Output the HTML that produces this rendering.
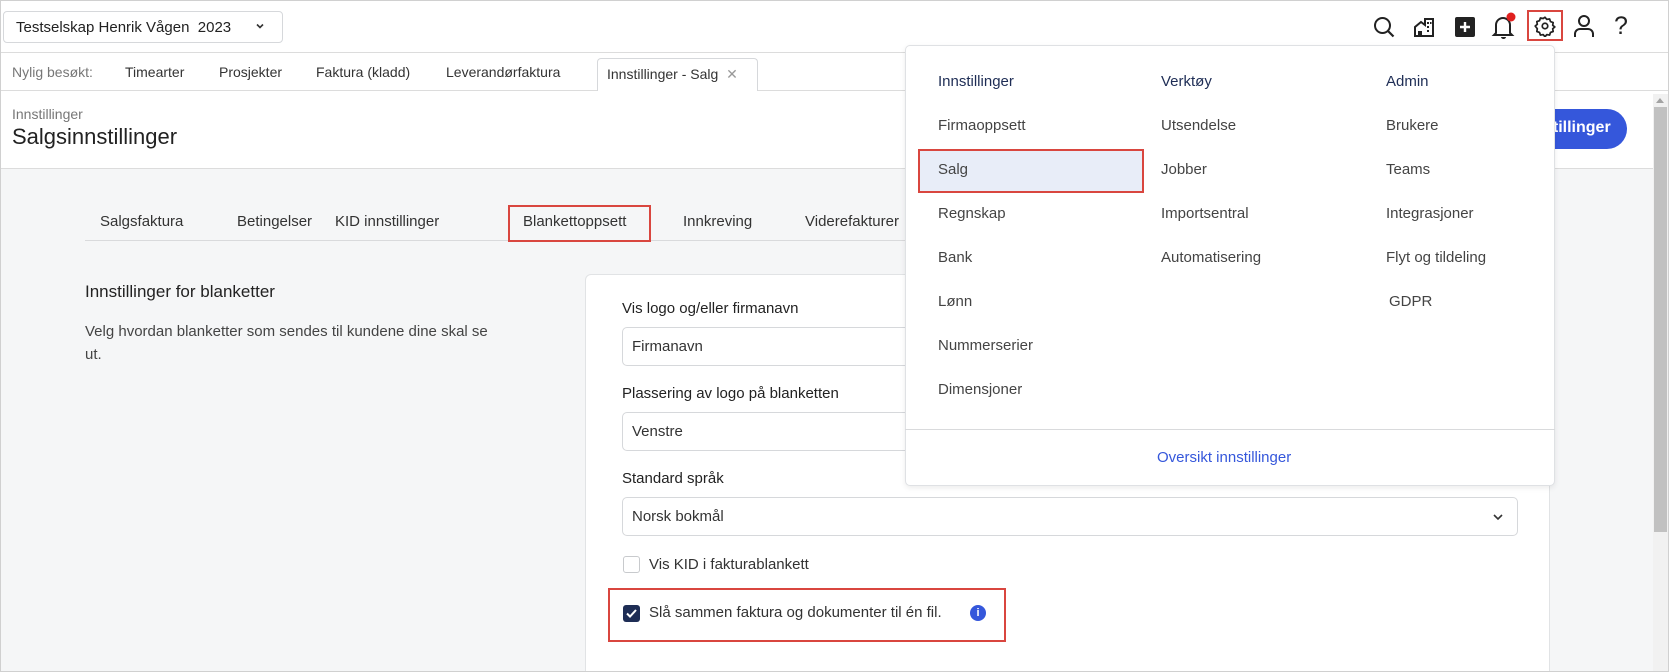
<!DOCTYPE html>
<html style="overflow:hidden;width:1669px;height:672px"><head><meta charset="utf-8"><style>
*{box-sizing:border-box;margin:0;padding:0}
body{width:1669px;height:672px;overflow:hidden;font-family:"Liberation Sans",sans-serif;color:#222;background:#fff;position:relative}
.a{position:absolute;white-space:nowrap}
.bd{border:1px solid #d6d8db}
</style></head><body>
<div class="a" style="left:0;top:0;width:1669px;height:672px;border:1px solid #d0d0d0;z-index:50;pointer-events:none"></div>
<!-- top bar -->
<div class="a" style="left:0;top:52px;width:1669px;height:1px;background:#dcdcdc"></div>
<div class="a bd" style="left:3px;top:11px;width:280px;height:32px;border-radius:4px"></div>
<div class="a" style="left:16px;top:19px;font-size:15px;color:#222">Testselskap Henrik Vågen&nbsp;&nbsp;2023</div>
<svg class="a" style="left:254px;top:20px" width="12" height="12" viewBox="0 0 12 12"><path d="M3 4.5l3 3 3-3" fill="none" stroke="#333" stroke-width="1.6"/></svg>
<!-- icons -->
<svg class="a" style="left:1372px;top:15px" width="24" height="24" viewBox="0 0 24 24"><circle cx="10.5" cy="10.5" r="7.5" fill="none" stroke="#222" stroke-width="2"/><path d="M16 16l5.5 5.5" stroke="#222" stroke-width="2.2"/></svg>
<svg class="a" style="left:1412px;top:15px" width="24" height="24" viewBox="0 0 24 24"><path d="M3 21V12l6-5 4 3V4h8v17z" fill="none" stroke="#222" stroke-width="2"/><path d="M6 21v-5h4v5" fill="#222"/><rect x="15" y="7" width="2" height="2" fill="#222"/><rect x="18" y="7" width="1.5" height="2" fill="#222"/><rect x="15" y="11" width="2" height="2" fill="#222"/><rect x="15" y="15" width="2" height="2" fill="#222"/></svg>
<svg class="a" style="left:1455px;top:17px" width="20" height="20" viewBox="0 0 20 20"><rect width="20" height="20" rx="2" fill="#222"/><path d="M10 5v10M5 10h10" stroke="#fff" stroke-width="2.4"/></svg>
<svg class="a" style="left:1491px;top:12px" width="26" height="28" viewBox="0 0 26 28"><path d="M5 21V13a7 7 0 0 1 14 0v8l2 2H3z" fill="none" stroke="#222" stroke-width="2"/><path d="M10 25a2.5 2 0 0 0 5 0" fill="#222"/><circle cx="20" cy="5" r="4.5" fill="#e0201e"/></svg>
<div class="a" style="left:1527px;top:10px;width:36px;height:31px;border:2px solid #d9463f"></div>
<svg class="a" style="left:1534px;top:15px" width="22" height="22" viewBox="0 0 24 24"><path d="M12 2.5l2 2.3 3-.5 1 2.9 2.9 1-.5 3 2.3 1.8-2.3 2 .5 3-2.9 1-1 2.9-3-.5-2 2.3-2-2.3-3 .5-1-2.9-2.9-1 .5-3L1.3 12l2.3-1.8-.5-3 2.9-1 1-2.9 3 .5z" fill="none" stroke="#222" stroke-width="1.9" stroke-linejoin="round"/><circle cx="12" cy="12" r="3" fill="none" stroke="#222" stroke-width="1.9"/></svg>
<svg class="a" style="left:1573px;top:14px" width="22" height="24" viewBox="0 0 22 24"><circle cx="11" cy="7" r="5" fill="none" stroke="#222" stroke-width="2"/><path d="M2 23v-3a5 5 0 0 1 5-5h8a5 5 0 0 1 5 5v3" fill="none" stroke="#222" stroke-width="2"/></svg>
<div class="a" style="left:1614px;top:12px;font-size:25px;color:#222">?</div>
<!-- recent tabs -->
<div class="a" style="left:0;top:90px;width:1669px;height:1px;background:#dcdcdc"></div>
<div class="a" style="left:12px;top:64px;font-size:14px;color:#777">Nylig besøkt:</div>
<div class="a" style="left:125px;top:64px;font-size:14px;color:#333">Timearter</div>
<div class="a" style="left:219px;top:64px;font-size:14px;color:#333">Prosjekter</div>
<div class="a" style="left:316px;top:64px;font-size:14px;color:#333">Faktura (kladd)</div>
<div class="a" style="left:446px;top:64px;font-size:14px;color:#333">Leverandørfaktura</div>
<div class="a" style="left:597px;top:58px;width:161px;height:33px;border:1px solid #d6d8db;border-bottom:none;border-radius:4px 4px 0 0;background:#fff"></div>
<div class="a" style="left:607px;top:66px;font-size:14px;color:#333">Innstillinger - Salg <span style="color:#999;margin-left:4px">✕</span></div>
<!-- header -->
<div class="a" style="left:12px;top:106px;font-size:14px;color:#777">Innstillinger</div>
<div class="a" style="left:12px;top:124px;font-size:22px;color:#222">Salgsinnstillinger</div>
<div class="a" style="left:1500px;top:109px;width:127px;height:40px;border-radius:20px;background:#3557db"></div>
<div class="a" style="left:1520px;top:119px;font-size:16px;font-weight:bold;color:#fff">Innstillinger</div>
<div class="a" style="left:0;top:168px;width:1669px;height:504px;background:#f5f6f7;border-top:1px solid #dcdcdc"></div>
<!-- page tabs -->
<div class="a" style="left:85px;top:240px;width:830px;height:1px;background:#d9dadc"></div>
<div class="a" style="left:100px;top:213px;font-size:15px;color:#333">Salgsfaktura</div>
<div class="a" style="left:237px;top:213px;font-size:15px;color:#333">Betingelser</div>
<div class="a" style="left:335px;top:213px;font-size:15px;color:#333">KID innstillinger</div>
<div class="a" style="left:508px;top:205px;width:143px;height:37px;border:2px solid #d9463f"></div>
<div class="a" style="left:523px;top:213px;font-size:15px;color:#333">Blankettoppsett</div>
<div class="a" style="left:683px;top:213px;font-size:15px;color:#333">Innkreving</div>
<div class="a" style="left:805px;top:213px;font-size:15px;color:#333">Viderefakturer</div>
<!-- left -->
<div class="a" style="left:85px;top:282px;font-size:17px;color:#222">Innstillinger for blanketter</div>
<div class="a" style="left:85px;top:320px;font-size:15px;color:#444;line-height:23px">Velg hvordan blanketter som sendes til kundene dine skal se<br>ut.</div>
<!-- card -->
<div class="a" style="left:585px;top:274px;width:965px;height:398px;background:#fff;border:1px solid #e1e3e5;border-bottom:none;border-radius:6px 6px 0 0"></div>
<div class="a" style="left:622px;top:300px;font-size:15px;color:#222">Vis logo og/eller firmanavn</div>
<div class="a bd" style="left:622px;top:327px;width:896px;height:39px;border-radius:5px"></div>
<div class="a" style="left:632px;top:338px;font-size:15px;color:#333">Firmanavn</div>
<div class="a" style="left:622px;top:385px;font-size:15px;color:#222">Plassering av logo på blanketten</div>
<div class="a bd" style="left:622px;top:412px;width:896px;height:39px;border-radius:5px"></div>
<div class="a" style="left:632px;top:423px;font-size:15px;color:#333">Venstre</div>
<div class="a" style="left:622px;top:470px;font-size:15px;color:#222">Standard språk</div>
<div class="a bd" style="left:622px;top:497px;width:896px;height:39px;border-radius:5px"></div>
<div class="a" style="left:632px;top:508px;font-size:15px;color:#333">Norsk bokmål</div>
<svg class="a" style="left:1491px;top:510px" width="14" height="14" viewBox="0 0 14 14"><path d="M3 5l4 4 4-4" fill="none" stroke="#333" stroke-width="1.6"/></svg>
<div class="a" style="left:623px;top:556px;width:17px;height:17px;border:1px solid #c8cacd;border-radius:3px;background:#fff"></div>
<div class="a" style="left:649px;top:556px;font-size:15px;color:#333">Vis KID i fakturablankett</div>
<div class="a" style="left:608px;top:588px;width:398px;height:54px;border:2px solid #d9463f"></div>
<div class="a" style="left:623px;top:605px;width:17px;height:17px;border-radius:3px;background:#1e2d55"></div>
<svg class="a" style="left:623px;top:605px" width="17" height="17" viewBox="0 0 17 17"><path d="M4 8.5l3 3 6-6.5" fill="none" stroke="#fff" stroke-width="2"/></svg>
<div class="a" style="left:649px;top:604px;font-size:15px;color:#333">Slå sammen faktura og dokumenter til én fil.</div>
<div class="a" style="left:970px;top:605px;width:16px;height:16px;border-radius:50%;background:#3557db;color:#fff;font-size:11px;font-weight:bold;text-align:center;line-height:16px">i</div>
<!-- scrollbar -->
<div class="a" style="left:1653px;top:94px;width:15px;height:578px;background:#f1f1f1"></div>
<div class="a" style="left:1656px;top:98px;width:0;height:0;border:4px solid transparent;border-bottom:5px solid #a3a3a3;border-top:none"></div>
<div class="a" style="left:1654px;top:107px;width:13px;height:425px;background:#c1c1c1"></div>
<!-- dropdown -->
<div class="a" style="left:905px;top:45px;width:650px;height:441px;background:#fff;border:1px solid #dfe1e4;border-radius:5px;box-shadow:0 2px 6px rgba(0,0,0,.08)"></div>
<div class="a" style="left:918px;top:149px;width:226px;height:44px;background:#e8edf8;border:2px solid #d9463f"></div>
<div style="font-size:15px">
<div class="a" style="left:938px;top:73px;color:#1e2d55">Innstillinger</div>
<div class="a" style="left:1161px;top:73px;color:#1e2d55">Verktøy</div>
<div class="a" style="left:1386px;top:73px;color:#1e2d55">Admin</div>
<div class="a" style="left:938px;top:117px;color:#444">Firmaoppsett</div>
<div class="a" style="left:938px;top:161px;color:#444">Salg</div>
<div class="a" style="left:938px;top:205px;color:#444">Regnskap</div>
<div class="a" style="left:938px;top:249px;color:#444">Bank</div>
<div class="a" style="left:938px;top:293px;color:#444">Lønn</div>
<div class="a" style="left:938px;top:337px;color:#444">Nummerserier</div>
<div class="a" style="left:938px;top:381px;color:#444">Dimensjoner</div>
<div class="a" style="left:1161px;top:117px;color:#444">Utsendelse</div>
<div class="a" style="left:1161px;top:161px;color:#444">Jobber</div>
<div class="a" style="left:1161px;top:205px;color:#444">Importsentral</div>
<div class="a" style="left:1161px;top:249px;color:#444">Automatisering</div>
<div class="a" style="left:1386px;top:117px;color:#444">Brukere</div>
<div class="a" style="left:1386px;top:161px;color:#444">Teams</div>
<div class="a" style="left:1386px;top:205px;color:#444">Integrasjoner</div>
<div class="a" style="left:1386px;top:249px;color:#444">Flyt og tildeling</div>
<div class="a" style="left:1389px;top:293px;color:#444">GDPR</div>
</div>
<div class="a" style="left:905px;top:429px;width:650px;height:1px;background:#d9dadc"></div>
<div class="a" style="left:1157px;top:449px;font-size:15px;color:#3557db">Oversikt innstillinger</div>
</body></html>
